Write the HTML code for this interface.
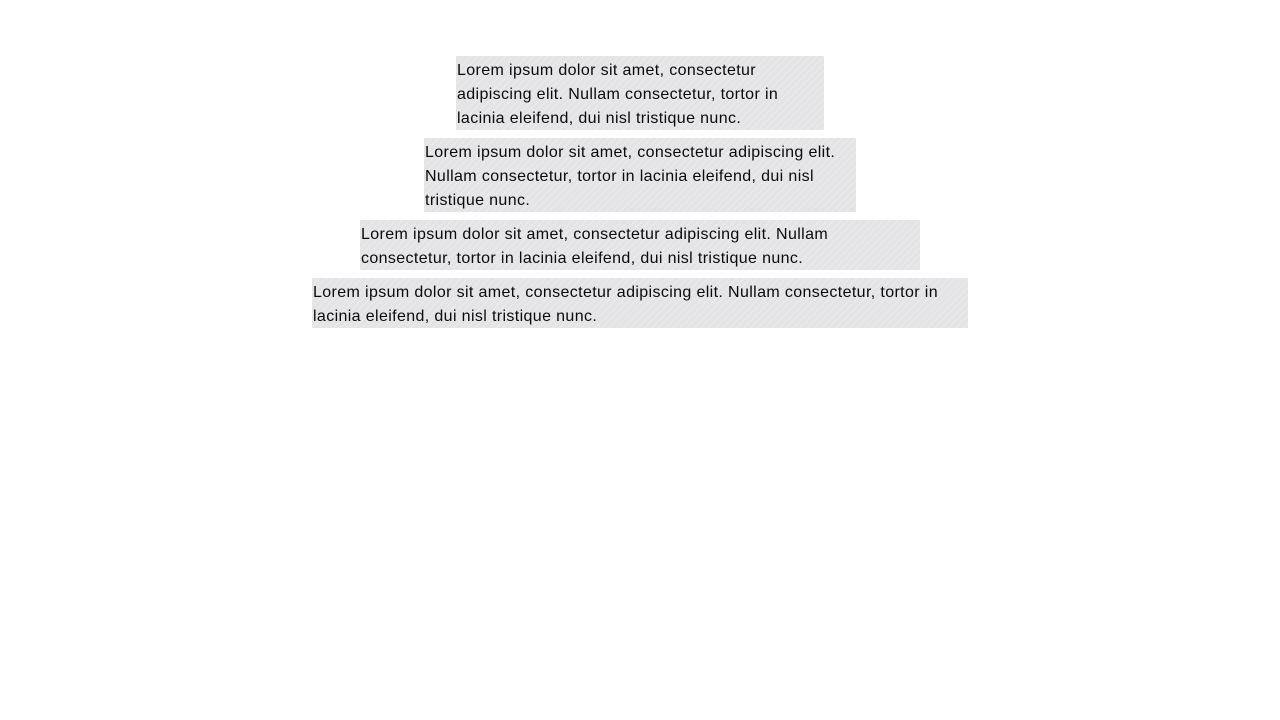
<!DOCTYPE html>
<html><head><style>
body{margin:0;background:#fff;font-family:"Liberation Sans",sans-serif;}
.b{position:absolute;left:50%;transform:translateX(-50%);box-sizing:border-box;padding:3px 1px 0;font-size:16px;line-height:24px;letter-spacing:0.37px;color:#0a0a0a;
background:#e4e4e7 repeating-linear-gradient(135deg,rgba(255,255,255,.25) 0 1px,transparent 1px 5px);}
</style></head><body>
<div class="b" style="top:56px;width:368px;height:74px">Lorem ipsum dolor sit amet, consectetur adipiscing elit. Nullam consectetur, tortor in lacinia eleifend, dui nisl tristique nunc.</div>
<div class="b" style="top:138px;width:432px;height:74px">Lorem ipsum dolor sit amet, consectetur adipiscing elit. Nullam consectetur, tortor in lacinia eleifend, dui nisl tristique nunc.</div>
<div class="b" style="top:220px;width:560px;height:50px">Lorem ipsum dolor sit amet, consectetur adipiscing elit. Nullam consectetur, tortor in lacinia eleifend, dui nisl tristique nunc.</div>
<div class="b" style="top:278px;width:656px;height:50px">Lorem ipsum dolor sit amet, consectetur adipiscing elit. Nullam consectetur, tortor in lacinia eleifend, dui nisl tristique nunc.</div>
</body></html>
